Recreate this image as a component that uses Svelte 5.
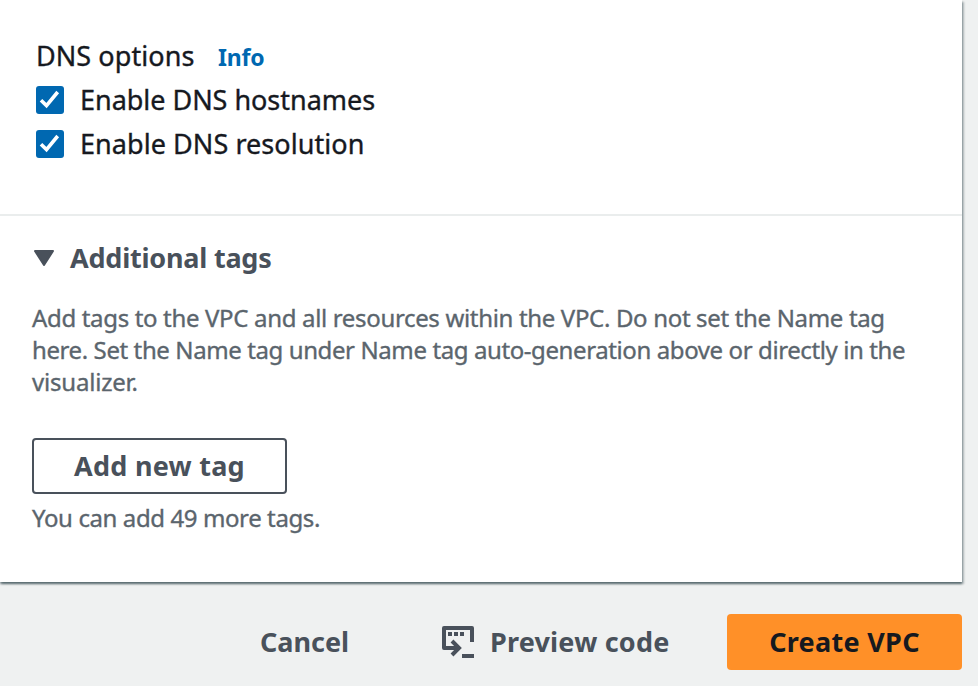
<script>
  const options = [
    { label: 'Enable DNS hostnames', cls: 'hostnames' },
    { label: 'Enable DNS resolution', cls: 'resolution' },
  ];
  const description = [
    'Add tags to the VPC and all resources within the VPC. Do not set the Name tag',
    'here. Set the Name tag under Name tag auto-generation above or directly in the',
    'visualizer.',
  ];
</script>

<main>
  <div class="panel">
    <section class="dns">
      <div class="heading">
        <span class="title">DNS options</span>
        <a class="info" href="#info">Info</a>
      </div>
      {#each options as option}
        <div class="option">
          <svg width="28" height="28" viewBox="0 0 28 28">
            <rect width="28" height="28" rx="3" fill="#0068b1" />
            <path d="M5 14.2 10.5 19.6 21.7 6" fill="none" stroke="#fff" stroke-width="3.6" />
          </svg>
          <span class={option.cls}>{option.label}</span>
        </div>
      {/each}
    </section>
    <section class="tags">
      <div class="expander">
        <svg width="20" height="16" viewBox="0 0 20 16">
          <path d="M1 1h18L10 15Z" fill="#49515b" stroke="#49515b" stroke-width="2" stroke-linejoin="round" />
        </svg>
        <h2>Additional tags</h2>
      </div>
      <p>
        {#each description as line, i}<span class="line line{i}">{line}</span>{/each}
      </p>
      <button class="add"><span>Add new tag</span></button>
      <div class="hint"><span>You can add 49 more tags.</span></div>
    </section>
  </div>
  <footer>
    <button class="cancel"><span>Cancel</span></button>
    <button class="preview">
      <svg width="32" height="32" viewBox="0 0 32 32" fill="none" stroke="#49515b" stroke-width="4">
        <path d="M30 16V2H2V22H17" stroke-linejoin="round" />
        <path d="M10 15l7 7-7 7" />
        <path d="M20 30h12" />
        <path d="M6 8h4M12 8h4M18 8h4" />
      </svg>
      <span>Preview code</span>
    </button>
    <button class="create"><span>Create VPC</span></button>
  </footer>
</main>

<style>
  :global(body) { background: #eff1f1; }
  main {
    width: 978px;
    height: 686px;
    overflow: hidden;
    font-family: 'Noto Sans', 'Open Sans', sans-serif;
    color: #16191f;
    background: #eff1f1;
  }
  .panel {
    box-sizing: border-box;
    width: 962px;
    height: 582px;
    background: #fff;
    box-shadow: 0 2px 2px 0 rgba(0, 28, 36, 0.5), 2px 2px 2px 0 rgba(0, 28, 36, 0.25);
  }
  .dns {
    box-sizing: border-box;
    height: 216px;
    padding: 34px 36px 0;
    border-bottom: 2px solid #eaeded;
  }
  span, h2 { white-space: nowrap; }
  .heading, .option {
    display: flex;
    align-items: center;
    height: 44px;
    font-size: 27px;
    line-height: 44px;
  }
  .title, .hostnames, .resolution, p, .hint { -webkit-text-stroke: 0.35px currentColor; }
  .title { width: 182px; letter-spacing: 0.07px; }
  .info {
    color: #0068b1;
    font-size: 23px;
    font-weight: 700;
    text-decoration: none;
    padding-top: 2px;
    letter-spacing: -0.2px;
  }
  .option svg { flex: none; margin-right: 16px; }
  .hostnames { letter-spacing: -0.03px; }
  .resolution { letter-spacing: 0.06px; }
  .tags { padding: 20px 32px 0; }
  .expander {
    display: flex;
    align-items: center;
    height: 44px;
    padding-left: 2px;
  }
  h2 {
    margin: 0 0 0 16px;
    font-size: 27px;
    line-height: 44px;
    letter-spacing: -0.22px;
    color: #49515b;
  }
  p {
    margin: 22px 0 40px;
    font-size: 24px;
    line-height: 32px;
    color: #5b656d;
  }
  .line { display: block; width: max-content; letter-spacing: -0.4px; }
  .line0 { letter-spacing: -0.335px; }
  .line2 { letter-spacing: -0.2px; }
  button {
    box-sizing: border-box;
    display: flex;
    align-items: center;
    justify-content: center;
    height: 56px;
    padding: 0;
    border: 0;
    border-radius: 4px;
    background: none;
    color: #49515b;
    font: 700 27px/40px 'Noto Sans', 'Open Sans', sans-serif;
  }
  .add { width: 255px; border: 2px solid #49515b; letter-spacing: 0.25px; }
  .hint {
    margin-top: 8px;
    font-size: 24px;
    line-height: 32px;
    color: #5b656d;
    letter-spacing: -0.4px;
  }
  footer {
    display: flex;
    align-items: center;
    margin-top: 32px;
    padding-left: 260px;
  }
  .cancel { width: 90px; justify-content: flex-start; }
  .preview { width: 285px; margin-left: 92px; justify-content: flex-start; letter-spacing: 0.2px; }
  .preview svg { flex: none; margin-right: 16px; }
  .create { width: 235px; color: #16191f; background: #ff9028; letter-spacing: 0.3px; }
</style>
